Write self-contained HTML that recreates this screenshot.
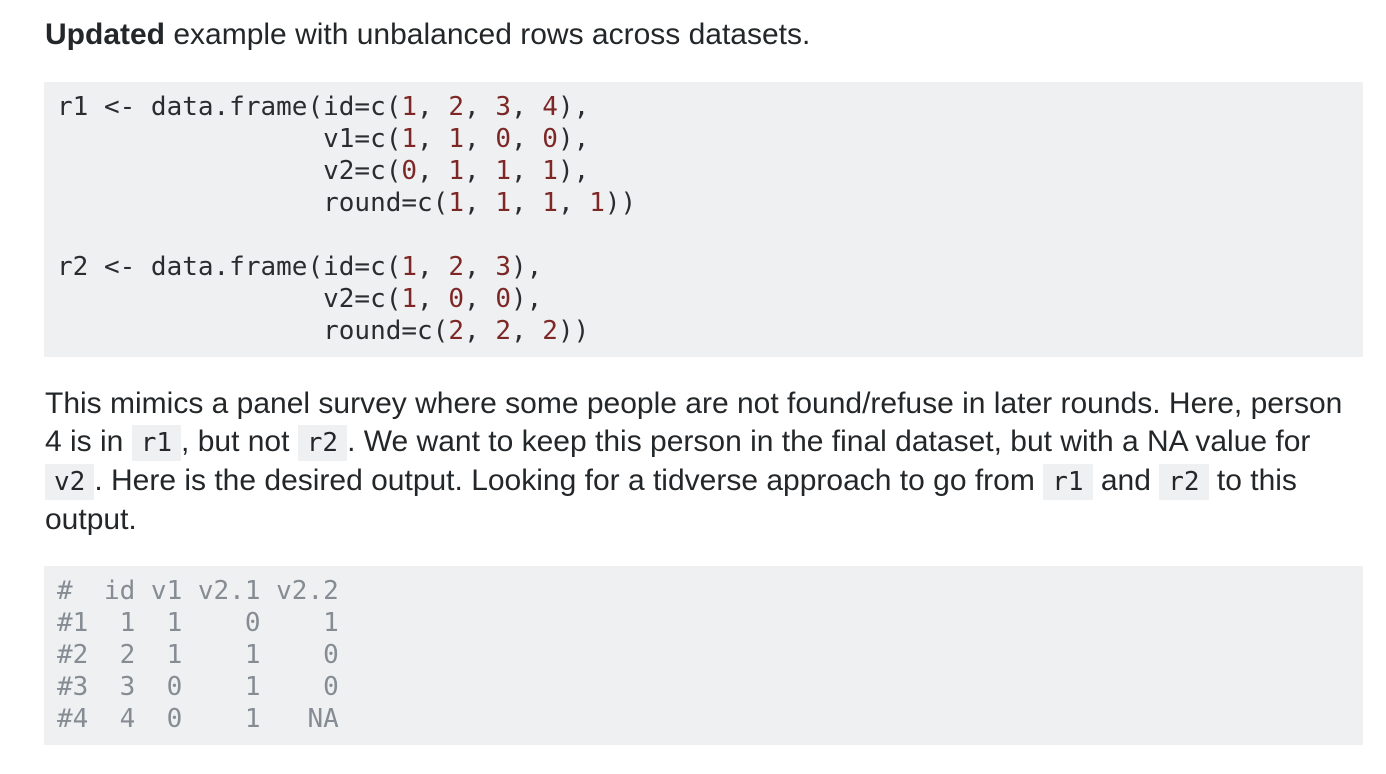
<!DOCTYPE html>
<html><head><meta charset="utf-8"><style>
body{margin:0;background:#fff;width:1386px;height:774px;overflow:hidden;font-family:"Liberation Sans",Arial,sans-serif;color:#242729;}
.p{position:absolute;left:45px;font-size:30px;line-height:38px;margin:0;width:1300px;}
pre{position:absolute;left:44px;width:1294px;margin:0;background:#eff0f1;padding:9px 12px 11px 13px;font-family:"DejaVu Sans Mono","Liberation Mono",monospace;font-size:26px;line-height:32px;color:#2a2d30;}
.n{color:#7d2727}
.g{color:#858c93}
code{font-family:"DejaVu Sans Mono","Liberation Mono",monospace;font-size:26px;background:#eff0f1;padding:3px 9px;}
</style></head><body>
<p class="p" style="top:16px"><b>Updated</b> example with unbalanced rows across datasets.</p>
<pre style="top:82px;height:255px">r1 &lt;- data.frame(id=c(<span class="n">1</span>, <span class="n">2</span>, <span class="n">3</span>, <span class="n">4</span>),
                 v1=c(<span class="n">1</span>, <span class="n">1</span>, <span class="n">0</span>, <span class="n">0</span>),
                 v2=c(<span class="n">0</span>, <span class="n">1</span>, <span class="n">1</span>, <span class="n">1</span>),
                 round=c(<span class="n">1</span>, <span class="n">1</span>, <span class="n">1</span>, <span class="n">1</span>))

r2 &lt;- data.frame(id=c(<span class="n">1</span>, <span class="n">2</span>, <span class="n">3</span>),
                 v2=c(<span class="n">1</span>, <span class="n">0</span>, <span class="n">0</span>),
                 round=c(<span class="n">2</span>, <span class="n">2</span>, <span class="n">2</span>))</pre>
<p class="p" style="top:385px">This mimics a panel survey where some people are not found/refuse in later rounds. Here, person<br>4 is in <code>r1</code>, but not <code>r2</code>. We want to keep this person in the final dataset, but with a NA value for<br><code>v2</code>. Here is the desired output. Looking for a tidverse approach to go from <code>r1</code> and <code>r2</code> to this<br>output.</p>
<pre class="g" style="top:566px;height:159px">#  id v1 v2.1 v2.2
#1  1  1    0    1
#2  2  1    1    0
#3  3  0    1    0
#4  4  0    1   NA</pre>
</body></html>
